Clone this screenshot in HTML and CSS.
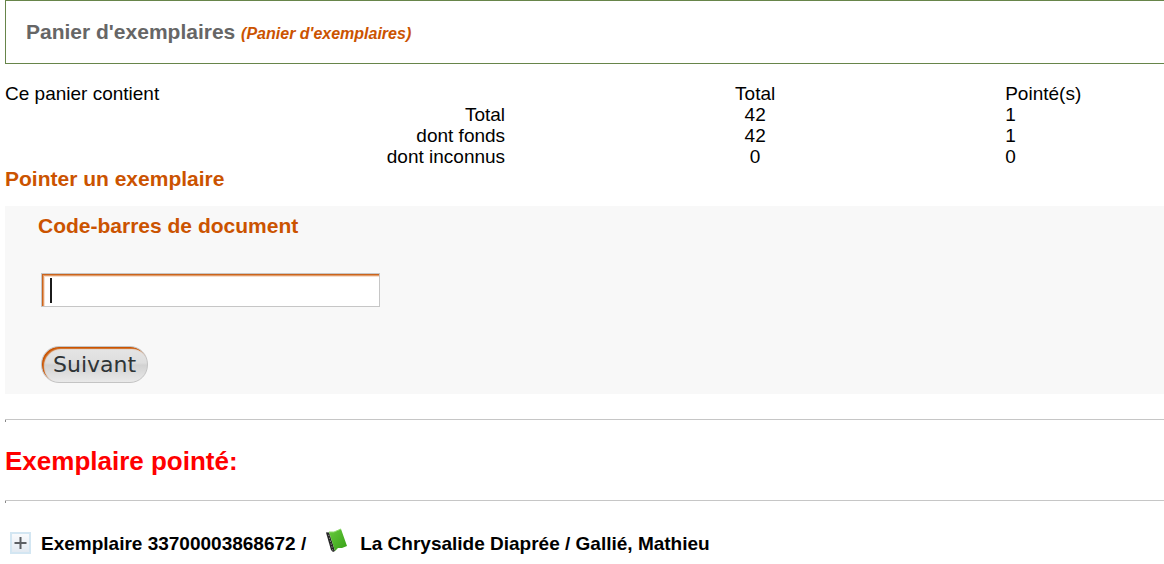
FILE: index.html
```html
<!DOCTYPE html>
<html lang="fr">
<head>
<meta charset="utf-8">
<title>Panier d'exemplaires</title>
<link rel="stylesheet" href="styles.css">
</head>
<body>
<main class="page">
  <header class="banner">
    <h1 class="banner-title">Panier d'exemplaires <em class="banner-name">(Panier d'exemplaires)</em></h1>
  </header>

  <table class="summary">
    <thead>
      <tr><th class="label-head" scope="col">Ce panier contient</th><th class="total" scope="col">Total</th><th class="checked" scope="col">Pointé(s)</th></tr>
    </thead>
    <tbody>
      <tr><th class="label" scope="row">Total</th><td class="total">42</td><td class="checked">1</td></tr>
      <tr><th class="label" scope="row">dont fonds</th><td class="total">42</td><td class="checked">1</td></tr>
      <tr><th class="label" scope="row">dont inconnus</th><td class="total">0</td><td class="checked">0</td></tr>
    </tbody>
  </table>

  <h2 class="section-title">Pointer un exemplaire</h2>
  <form class="panel">
    <label class="field-label" for="barcode">Code-barres de document</label>
    <div class="field">
      <input class="field-input" id="barcode" type="text">
      <span class="caret"></span>
    </div>
    <button class="submit" type="button">Suivant</button>
  </form>

  <hr class="rule">
  <h2 class="result-title">Exemplaire pointé:</h2>
  <hr class="rule">

  <div class="item">
    <button class="expand" type="button" aria-label="Déplier">
      <svg width="22" height="22" viewBox="0 0 22 22">
        <defs><linearGradient id="tile" x1="0" y1="0" x2="0" y2="1"><stop offset="0" stop-color="#fafbfd"/><stop offset="1" stop-color="#e2e9f1"/></linearGradient></defs>
        <rect x="1" y="1" width="19" height="20" fill="url(#tile)" stroke="#d3e6f2" stroke-width="2"/>
        <path d="M4.500 11h12M10.500 5v12" stroke="#5c5f63" stroke-width="2"/>
      </svg>
    </button>
    <span class="item-code">Exemplaire 33700003868672 /</span>
    <svg class="book" width="24" height="26" viewBox="0 0 24 26">
      <defs><linearGradient id="cover" x1="0" y1="0" x2="1" y2="1"><stop offset="0" stop-color="#67c93d"/><stop offset="1" stop-color="#36a016"/></linearGradient></defs>
      <path d="M1 4.500L4 4L10 23L8 24L6 22Z" fill="#252525"/>
      <path d="M3 4L8 23" stroke="#b8b8b8" stroke-width="1" stroke-dasharray="1 2"/>
      <path d="M4 4L9 4L16 1L22 18L17 20L13 20L10 23Z" fill="url(#cover)"/>
      <path d="M4 4L9 4L16 1" fill="none" stroke="#8bd969" stroke-width="1"/>
    </svg>
    <span class="item-title">La Chrysalide Diaprée / Gallié, Mathieu</span>
  </div>
</main>
</body>
</html>
```
FILE: styles.css
```css
body {
  margin: 0;
  background: #fff;
  color: #000;
  font-family: "Liberation Sans", Arial, sans-serif;
  font-size: 19px;
  line-height: 21px;
}

h1, h2 { margin: 0; }

.page { padding-left: 5px; }

.banner {
  border: 1px solid #67854a;
  border-right: 0;
  padding: 19px 20px;
}

.banner-title {
  color: #666;
  font-size: 21px;
  line-height: 24px;
}

.banner {
  padding-bottom: 17px;
}

.banner-name {
  color: #cb5300;
  font-size: 16px;
}

.summary {
  width: 100%;
  margin-top: 19px;
  border-collapse: collapse;
  table-layout: fixed;
}

.summary th, .summary td {
  padding: 0;
  font-weight: normal;
}

.summary .label-head { width: 43.15%; text-align: left; }
.summary .label { text-align: right; }
.summary .total { width: 43.15%; text-align: center; }
.summary .checked { text-align: left; }

.section-title {
  color: #cb5300;
  font-size: 21px;
  line-height: 24px;
}

.panel {
  display: flex;
  flex-direction: column;
  align-items: flex-start;
  margin-top: 15px;
  padding: 8px 33px 11px;
  background: #f8f8f8;
}

.field-label {
  color: #cb5300;
  font-size: 21px;
  font-weight: bold;
  line-height: 24px;
}

.field {
  position: relative;
  margin: 35px 0 39px 3px;
}

.field-input {
  display: block;
  box-sizing: border-box;
  width: 339px;
  height: 34px;
  padding: 0 12px;
  border: 1px solid #c6c6c6;
  background: #fff;
  box-shadow: inset 1px 1px #cb641c, inset 2px 2px #e09b69, inset 3px 3px #f7dfcd;
  font: 22px "DejaVu Sans", sans-serif;
}

.caret {
  position: absolute;
  top: 5px;
  left: 9px;
  width: 2px;
  height: 25px;
  background: #1b1b1b;
}

.submit {
  height: 37px;
  margin-left: 3px;
  padding: 0 11px;
  border: 1px solid #c4c4c4;
  border-radius: 18px;
  background: linear-gradient(#e6e6e6, #dedede 45%, #d2d2d2 52%, #e9e9e9);
  box-shadow: inset 1px 1px #cb5300, inset 2px 2px 1px #cf6a20;
  color: #2e3436;
  font: 22px "DejaVu Sans", sans-serif;
}

.rule {
  height: 2px;
  margin: 25px 0 0;
  border: 0;
  border-top: 1px solid #c6c6c6;
  background: linear-gradient(90deg, #888 1px, transparent 1px);
}

.result-title {
  margin-top: 24px;
  color: #f00;
  font-size: 26px;
  line-height: 30px;
}

.result-title + .rule { margin-top: 24px; }

.item {
  display: flex;
  align-items: center;
  margin-top: 24px;
  padding-left: 5px;
  font-weight: bold;
}

.expand {
  display: flex;
  margin-top: 5px;
  padding: 0;
  border: 0;
  background: none;
}

.item-code { margin: 6px 19px 0 9px; }
.item-title { margin: 6px 0 0 11px; }
```
